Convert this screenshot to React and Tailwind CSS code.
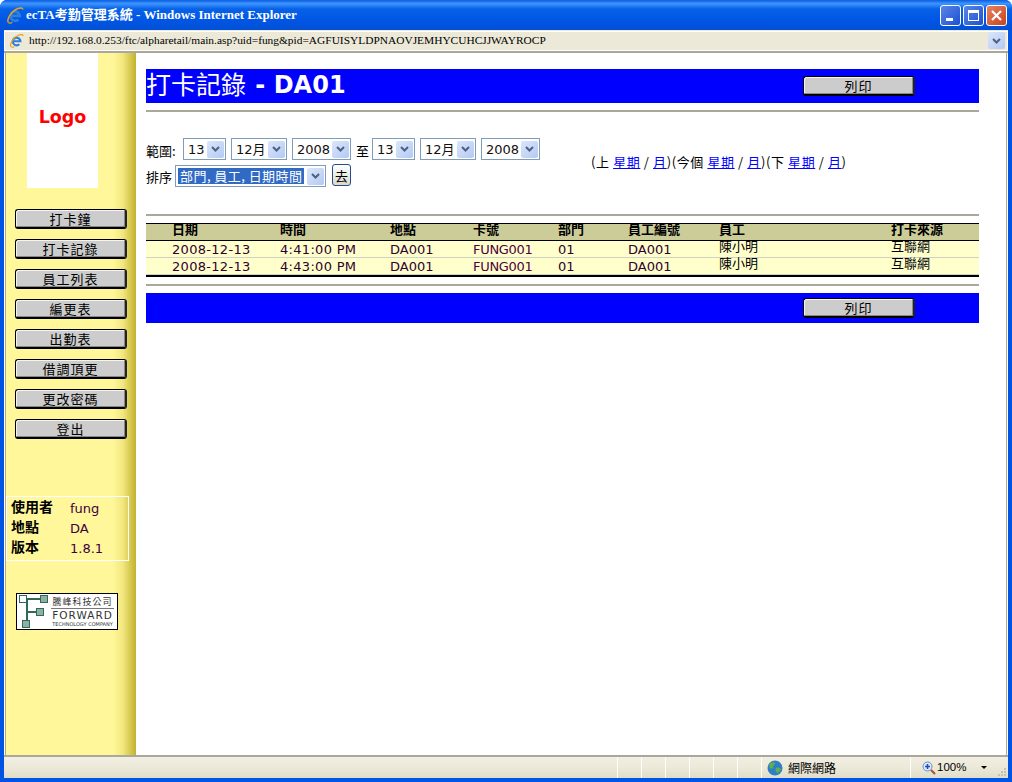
const cjk = "font-['Noto_Sans_CJK_TC',sans-serif]";
const verdana = "font-['DejaVu_Sans','Noto_Sans_CJK_TC',sans-serif]";

const menuItems = ["打卡鐘", "打卡記錄", "員工列表", "編更表", "出勤表", "借調頂更", "更改密碼", "登出"];

const rows = [
  { date: "2008-12-13", time: "4:41:00 PM" },
  { date: "2008-12-13", time: "4:43:00 PM" },
];

function IeIcon({ size = 16 }) {
  return (
    <svg width={size} height={size} viewBox="0 0 16 16" fill="none">
      <path d="M4.6 8.8h7.6A4.1 4.1 0 1 0 11 12" stroke="#2f80dc" strokeWidth="2.3" />
      <path d="M2 14.6C.4 12 4.6 4.6 10 2.4c2.8-1.1 5-1 5 .8" stroke="#e8a020" strokeWidth="1.3" />
      <path d="M2 14.6c1 .8 2.4.6 3.6 0" stroke="#e8a020" strokeWidth="1.1" />
    </svg>
  );
}

function WindowButton({ children, className }) {
  return (
    <div className={`w-[21px] h-[21px] rounded-[3px] border border-white flex items-center justify-center ${className}`}>
      {children}
    </div>
  );
}

function Chevron() {
  return (
    <svg width="9" height="6" viewBox="0 0 9 6" fill="none">
      <path d="M1 1l3.5 3.5L8 1" stroke="#4d6185" strokeWidth="2" />
    </svg>
  );
}

function DropArrow() {
  return (
    <div className="w-[17px] h-[17px] shrink-0 rounded-[2px] bg-gradient-to-br from-[#dbe6fb] to-[#b4c9f2] flex items-center justify-center">
      <Chevron />
    </div>
  );
}

function FakeSelect({ value, width }) {
  return (
    <div className={`${width} h-[22px] border border-[#7f9db9] bg-white flex items-center justify-between pl-[4px] pr-[1px] text-[13px] leading-none text-[#111] ${verdana}`}>
      <span className="whitespace-nowrap">{value}</span>
      <DropArrow />
    </div>
  );
}

function GreyButton({ label, width = "w-[112px]" }) {
  return (
    <div className={`${width} h-[20px] rounded-[3px] border border-black border-r-2 border-b-2 border-r-[#222] bg-[#cccccc] shadow-[inset_1px_1px_0_#f4f4f4,inset_-1px_-1px_0_#888] flex items-center justify-center text-[13px] leading-none text-black tracking-[1px] ${cjk}`}>
      {label}
    </div>
  );
}

function Rule() {
  return <div className="h-[2px] bg-[#aca899]" />;
}

function Sidebar() {
  return (
    <div className="w-[130px] shrink-0 flex flex-col bg-[linear-gradient(90deg,#fff799_0%,#fff799_82%,#f2e67f_90%,#c2b22c_100%)]">
      <div className="ml-[21px] w-[71px] h-[135px] bg-white flex items-center justify-center pb-[6px]">
        <span className="text-[17.5px] font-bold text-[#ff0000] font-['DejaVu_Sans',sans-serif]">Logo</span>
      </div>
      <div className="ml-[9px] mt-[21px] flex flex-col gap-[10px]">
        {menuItems.map((item) => (
          <GreyButton key={item} label={item} />
        ))}
      </div>
      <div className="mt-[57px] w-[123px] h-[65px] border border-white pl-[4px] pt-[1px]">
        {[
          ["使用者", "fung"],
          ["地點", "DA"],
          ["版本", "1.8.1"],
        ].map(([label, value]) => (
          <div key={label} className="flex h-[20px] items-center">
            <span className={`w-[59px] text-[14px] font-bold leading-none text-black -translate-y-[2px] ${cjk}`}>{label}</span>
            <span className={`text-[13px] leading-none text-[#400040] ${verdana}`}>{value}</span>
          </div>
        ))}
      </div>
      <div className="ml-[10px] mt-[32px] w-[102px] h-[37px] border border-black bg-white flex items-center pl-[1px]">
        <svg width="33" height="35" viewBox="0 0 33 35" fill="none" className="shrink-0">
          <path d="M5 5h22M9 5v26M9 18h14" stroke="#2d6a5c" strokeWidth="2" />
          <rect x="1.5" y="1.5" width="7" height="7" fill="#fff" stroke="#2d6a5c" />
          <rect x="22.5" y="1.5" width="7" height="7" fill="#8fb09f" stroke="#2d6a5c" />
          <rect x="18.5" y="14.5" width="7" height="7" fill="#8fb09f" stroke="#2d6a5c" />
          <rect x="4.5" y="26.5" width="7" height="7" fill="#8fb09f" stroke="#2d6a5c" />
        </svg>
        <div className="flex-1 min-w-0 flex flex-col items-center leading-none text-[#333] pr-[3px] whitespace-nowrap">
          <span className={`text-[9px] leading-[12px] tracking-[1px] w-full text-center border-b border-[#777] ${cjk}`}>騰峰科技公司</span>
          <span className="text-[10.5px] leading-[12px] tracking-[1px] font-['DejaVu_Sans',sans-serif]">FORWARD</span>
          <span className="text-[5px] leading-[7px] font-['DejaVu_Sans',sans-serif]">TECHNOLOGY COMPANY</span>
        </div>
      </div>
    </div>
  );
}

function PeriodLinks({ prefix }) {
  return (
    <>
      ({prefix} <a className="text-[#0000ff] underline">星期</a> / <a className="text-[#0000ff] underline">月</a>)
    </>
  );
}

function Filters() {
  return (
    <div className="mt-[26px] h-[76px] flex items-start">
      <div className={`w-[445px] shrink-0 text-[13px] leading-none text-black ${cjk}`}>
        <div className="flex items-center h-[22px]">
          <span className="w-[37px] pt-[3px]">範圍:</span>
          <FakeSelect value="13" width="w-[43px]" />
          <div className="w-[5px]" />
          <FakeSelect value="12月" width="w-[56px]" />
          <div className="w-[5px]" />
          <FakeSelect value="2008" width="w-[59px]" />
          <span className="w-[21px] pl-[5px] pt-[3px]">至</span>
          <FakeSelect value="13" width="w-[43px]" />
          <div className="w-[5px]" />
          <FakeSelect value="12月" width="w-[56px]" />
          <div className="w-[5px]" />
          <FakeSelect value="2008" width="w-[59px]" />
        </div>
        <div className="flex items-start h-[23px] mt-[4px]">
          <span className="w-[29px] pt-[6px]">排序</span>
          <div className="w-[151px] h-[22px] mt-[1px] border border-[#7f9db9] bg-white flex items-center justify-between pl-[2px] pr-[1px]">
            <span className="bg-[#316ac5] text-white text-[13px] leading-[16px] h-[16px] px-[2px] tracking-[0.45px] whitespace-nowrap">部門, 員工, 日期時間</span>
            <DropArrow />
          </div>
          <div className="ml-[6px] w-[19px] h-[22px] rounded-[3px] border border-[#1f4f8f] bg-gradient-to-b from-white to-[#dcd9c9] flex items-center justify-center text-[13px]">去</div>
        </div>
      </div>
      <div className={`text-[13px] leading-none text-black tracking-[0.6px] whitespace-pre pt-[17px] ${cjk}`}>
        <PeriodLinks prefix="上" />
        <PeriodLinks prefix="今個" />
        <PeriodLinks prefix="下" />
      </div>
    </div>
  );
}

const colWidths = "grid grid-cols-[26px_108px_110px_83px_85px_70px_91px_172px_1fr]";

function RecordTable() {
  const head = ["", "日期", "時間", "地點", "卡號", "部門", "員工編號", "員工", "打卡來源"];
  return (
    <div className="mt-[7px]">
      <div className={`${colWidths} h-[18px] border-y border-black bg-[#cccc99] items-center text-[13px] font-bold leading-none text-black ${cjk}`}>
        {head.map((h, i) => (
          <span key={i} className="-translate-y-[4px]">{h}</span>
        ))}
      </div>
      {rows.map((row, i) => (
        <div key={i} className={`${colWidths} h-[17px] border-b border-[#d0d0c4] bg-[#ffffcc] items-center text-[13px] leading-none text-[#300030] ${verdana}`}>
          <span />
          <span className="tracking-[0.3px]">{row.date}</span>
          <span className="tracking-[0.3px]">{row.time}</span>
          <span>DA001</span>
          <span className="text-[#500040] tracking-[-0.3px]">FUNG001</span>
          <span>01</span>
          <span>DA001</span>
          <span className={`text-black -translate-y-[4px] ${cjk}`}>陳小明</span>
          <span className={`text-black -translate-y-[4px] ${cjk}`}>互聯網</span>
        </div>
      ))}
      <div className="h-[2px] bg-black" />
    </div>
  );
}

function Content() {
  return (
    <div className="flex-1 bg-white pl-[10px] pr-[27px] pt-[16px]">
      <div className="h-[34px] bg-[#0000ff] flex items-center text-white leading-none">
        <span className={`text-[25px] -translate-y-[3px] ${cjk}`}>打卡記錄</span>
        <span className="ml-[1px] text-[24px] -translate-y-[1px] font-bold font-['DejaVu_Sans',sans-serif] whitespace-pre"> - DA01</span>
        <div className="ml-auto mr-[64px]">
          <GreyButton label="列印" />
        </div>
      </div>
      <div className="mt-[7px]"><Rule /></div>
      <Filters />
      <Rule />
      <RecordTable />
      <div className="mt-[7px]"><Rule /></div>
      <div className="mt-[7px] h-[30px] bg-[#0000ff] flex items-center justify-end pr-[64px]">
        <GreyButton label="列印" />
      </div>
    </div>
  );
}

function StatusBar() {
  return (
    <div className="h-[23px] shrink-0 border-t-2 border-[#aca899] bg-gradient-to-b from-[#f1efe4] via-[#ece9d8] to-[#e0ddcb] flex items-stretch text-[12px] leading-none text-black">
      <div className="w-[613px] shrink-0" />
      {[0, 1, 2, 3, 4, 5].map((i) => (
        <div key={i} className="w-[24px] shrink-0 border-l border-white" />
      ))}
      <div className={`w-[149px] shrink-0 border-l border-white flex items-center pl-[5px] gap-[5px] ${cjk}`}>
        <svg width="16" height="16" viewBox="0 0 16 16">
          <circle cx="8" cy="8" r="7.5" fill="#2d7fc8" />
          <path d="M3 3c2-1 4-1 5 0 0 2-2 2-2 4s-2 2-3 1-1-3 0-5zM9 8c2-1 4 0 5 1-1 3-3 4-4 4-1-1-2-3-1-5z" fill="#5fb04a" />
        </svg>
        <span>網際網路</span>
      </div>
      <div className="flex-1 min-w-0 border-l border-white flex items-center pl-[11px] font-['Liberation_Sans',sans-serif]">
        <svg width="14" height="14" viewBox="0 0 14 14" fill="none" className="shrink-0">
          <circle cx="5.5" cy="5.5" r="4.5" fill="#dce8fb" stroke="#6b8fc4" />
          <path d="M3 5.5h5M5.5 3v5" stroke="#2050b0" strokeWidth="1.6" />
          <path d="M9 9l4 4" stroke="#a0522d" strokeWidth="2" />
        </svg>
        <span className="ml-[1px] text-[11.5px]">100%</span>
        <div className="ml-[15px] shrink-0 w-0 h-0 border-x-[3px] border-x-transparent border-t-[3px] border-t-black" />
        <svg width="9" height="9" viewBox="0 0 9 9" className="ml-[10px] mt-[8px] shrink-0">
          <path d="M7 1h2v2H7zM4 4h2v2H4zM7 4h2v2H7zM1 7h2v2H1zM4 7h2v2H4zM7 7h2v2H7z" fill="#c4c1b0" />
        </svg>
      </div>
    </div>
  );
}

export default function App() {
  return (
    <div className="w-[1012px] h-[782px] overflow-hidden flex flex-col bg-[#0054e3] rounded-t-[7px]">
      {/* title bar */}
      <div className="h-[30px] shrink-0 flex items-center pl-[6px] pr-[5px] bg-[linear-gradient(180deg,#0a5de0_0%,#3d95ff_12%,#0761e6_30%,#0055e5_70%,#0350d2_100%)]">
        <IeIcon size={18} />
        <span className="ml-[2px] text-[13px] font-bold text-white font-['Liberation_Serif','Noto_Sans_CJK_TC',serif] whitespace-pre">ecTA考勤管理系統 - Windows Internet Explorer</span>
        <div className="ml-auto flex gap-[2px]">
          <WindowButton className="bg-gradient-to-br from-[#5a86e8] to-[#1d4fd0]">
            <div className="w-[7px] h-[3px] bg-white mt-[9px] -ml-[3px]" />
          </WindowButton>
          <WindowButton className="bg-gradient-to-br from-[#5a86e8] to-[#1d4fd0]">
            <div className="w-[11px] h-[11px] border border-white border-t-[3px]" />
          </WindowButton>
          <WindowButton className="bg-gradient-to-br from-[#e8825f] to-[#c8401c]">
            <svg width="13" height="13" viewBox="0 0 13 13"><path d="M2 2l9 9M11 2l-9 9" stroke="#fff" strokeWidth="2.2" /></svg>
          </WindowButton>
        </div>
      </div>
      {/* address bar, page and status bar sit inside the blue frame */}
      <div className="flex-1 min-h-0 mx-[4px] mb-[4px] flex flex-col">
        <div className="h-[23px] shrink-0 border-b-2 border-[#aca899] bg-[#ece9d8] flex items-center">
          <div className="h-[20px] flex-1 border border-white flex items-center pl-[4px] pr-[2px]">
            <IeIcon size={15} />
            <span className="ml-[5px] text-[11.4px] text-black font-['Liberation_Serif',serif] whitespace-pre">http://192.168.0.253/ftc/alpharetail/main.asp?uid=fung&amp;pid=AGFUISYLDPNAOVJEMHYCUHCJJWAYROCP</span>
            <div className="ml-auto"><DropArrow /></div>
          </div>
        </div>
        <div className="flex-1 min-h-0 flex bg-white">
          <div className="w-[1px] shrink-0 bg-white" />
          <div className="w-[1px] shrink-0 bg-[#aca899]" />
          <Sidebar />
          <Content />
          <div className="w-[1px] shrink-0 bg-[#aca899]" />
          <div className="w-[1px] shrink-0 bg-white" />
        </div>
        <StatusBar />
      </div>
    </div>
  );
}
